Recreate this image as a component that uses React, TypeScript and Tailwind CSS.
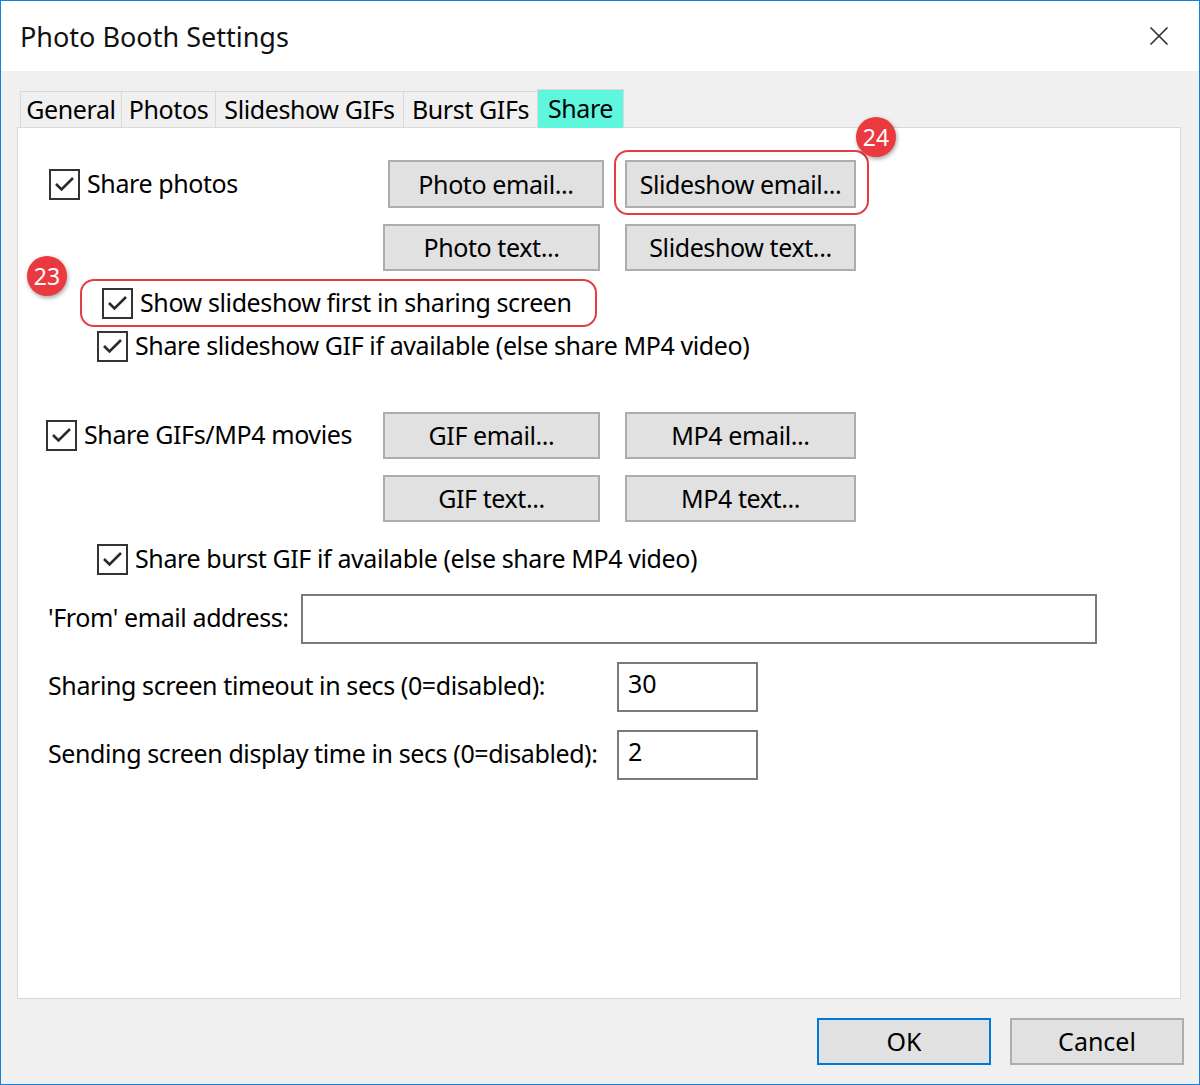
import { X } from 'lucide-react'

const font = "font-['Noto_Sans',sans-serif]"

function CheckBox() {
  return (
    <div className="w-[31px] h-[31px] shrink-0 border-2 border-[#333333] bg-white flex items-center justify-center">
      <svg width="27" height="27" viewBox="0 0 27 27">
        <path d="M5 13 L10.5 18.5 L22 7" fill="none" stroke="#2a2a2a" strokeWidth="2.6" />
      </svg>
    </div>
  )
}

function CheckRow({ label }: { label: string }) {
  return (
    <div className="flex items-center gap-[7px]">
      <CheckBox />
      <span className="text-[25px] leading-none tracking-[-0.4px] whitespace-nowrap -mt-[2px]">{label}</span>
    </div>
  )
}

function Btn({ label, className = '' }: { label: string; className?: string }) {
  return (
    <div className={`relative h-full bg-[#e1e1e1] border-2 border-[#adadad] flex items-center justify-center text-[25px] leading-none tracking-[-0.4px] ${className}`}>
      {label}
    </div>
  )
}

function Badge({ n, className }: { n: string; className: string }) {
  return (
    <div className={`absolute w-[40px] h-[40px] rounded-full bg-[#ea3a40] text-white text-[23px] leading-none flex items-center justify-center shadow-[1px_2px_4px_rgba(0,0,0,0.35)] ${className}`}>
      {n}
    </div>
  )
}

export default function App() {
  const tabs = ['General', 'Photos', 'Slideshow GIFs', 'Burst GIFs']
  const tabWidths = ['w-[102px]', 'w-[95px]', 'w-[189px]', 'w-[135px]']

  return (
    <div className={`w-[1200px] h-[1085px] flex flex-col border border-[#1a7fd6] bg-[#f0f0f0] text-black ${font}`}>
      {/* title bar */}
      <div className="h-[70px] bg-white flex items-center justify-between pl-[19px] pr-[24px] shrink-0">
        <span className="text-[27px] leading-none text-[#111]">Photo Booth Settings</span>
        <X className="w-[32px] h-[32px] text-[#333]" strokeWidth={1.3} />
      </div>

      {/* tabs */}
      <div className="flex items-end pl-[19px] mt-[17px] h-[39px] relative z-10">
        {tabs.map((t, i) => (
          <div
            key={t}
            className={`${tabWidths[i]} h-[36px] border border-b-0 border-[#d9d9d9] flex items-center justify-center text-[25px] leading-none tracking-[-0.4px] bg-[#f0f0f0] -mr-px`}
          >
            {t}
          </div>
        ))}
        <div className="w-[87px] h-[39px] bg-[#5ef6dd] border border-b-0 border-[#d9d9d9] flex items-center justify-center text-[25px] leading-none tracking-[-0.4px] -mb-px pb-[2px]">
          Share
        </div>
      </div>

      {/* panel */}
      <div className="ml-[16px] w-[1164px] h-[872px] bg-white border border-[#d9d9d9] flex flex-col">
        {/* share photos */}
        <div className="flex items-center h-[48px] mt-[32px]">
          <div className="w-[370px] pl-[31px]">
            <CheckRow label="Share photos" />
          </div>
          <Btn label="Photo email..." className="w-[216px]" />
          <div className="relative ml-[21px] h-full">
            <Btn label="Slideshow email..." className="w-[231px]" />
            <div className="absolute left-[-11px] top-[-10px] w-[255px] h-[65px] border-2 border-[#e63c45] rounded-[14px]" />
            <Badge n="24" className="left-[231px] top-[-43px]" />
          </div>
        </div>
        <div className="flex items-center h-[47px] mt-[16px]">
          <div className="w-[365px]" />
          <Btn label="Photo text..." className="w-[217px]" />
          <Btn label="Slideshow text..." className="w-[231px] ml-[25px]" />
        </div>

        <div className="pl-[84px] mt-[17px] flex">
          <div className="relative">
            <div className="absolute left-[-22px] top-[-9px] w-[517px] h-[48px] border-2 border-[#e63c45] rounded-[14px]" />
            <Badge n="23" className="left-[-75px] top-[-32px]" />
            <CheckRow label="Show slideshow first in sharing screen" />
          </div>
        </div>
        <div className="pl-[79px] mt-[12px]">
          <CheckRow label="Share slideshow GIF if available (else share MP4 video)" />
        </div>

        {/* share gifs */}
        <div className="flex items-center h-[47px] mt-[50px]">
          <div className="w-[365px] pl-[28px]">
            <CheckRow label="Share GIFs/MP4 movies" />
          </div>
          <Btn label="GIF email..." className="w-[217px]" />
          <Btn label="MP4 email..." className="w-[231px] ml-[25px]" />
        </div>
        <div className="flex items-center h-[47px] mt-[16px]">
          <div className="w-[365px]" />
          <Btn label="GIF text..." className="w-[217px]" />
          <Btn label="MP4 text..." className="w-[231px] ml-[25px]" />
        </div>
        <div className="pl-[79px] mt-[22px]">
          <CheckRow label="Share burst GIF if available (else share MP4 video)" />
        </div>

        {/* fields */}
        <div className="flex items-center h-[50px] mt-[19px]">
          <div className="w-[283px] pl-[30px] text-[25px] leading-none tracking-[-0.4px] whitespace-nowrap -mt-[4px]">'From' email address:</div>
          <div className="w-[796px] h-full border-2 border-[#7a7a7a] bg-white" />
        </div>
        <div className="flex items-center h-[50px] mt-[18px]">
          <div className="w-[599px] pl-[30px] text-[25px] leading-none tracking-[-0.4px] whitespace-nowrap -mt-[3px]">Sharing screen timeout in secs (0=disabled):</div>
          <div className="w-[141px] h-full border-2 border-[#7a7a7a] bg-white pl-[9px] pt-[7px] text-[25px] leading-none">30</div>
        </div>
        <div className="flex items-center h-[50px] mt-[18px]">
          <div className="w-[599px] pl-[30px] text-[25px] leading-none tracking-[-0.4px] whitespace-nowrap -mt-[3px]">Sending screen display time in secs (0=disabled):</div>
          <div className="w-[141px] h-full border-2 border-[#7a7a7a] bg-white pl-[9px] pt-[7px] text-[25px] leading-none">2</div>
        </div>
      </div>

      {/* footer buttons */}
      <div className="flex justify-end gap-[19px] pr-[15px] mt-[19px]">
        <div className="w-[174px] h-[47px] bg-[#e1e1e1] border-2 border-[#0078d7] flex items-center justify-center text-[25px] leading-none">OK</div>
        <div className="w-[174px] h-[47px] bg-[#e1e1e1] border-2 border-[#adadad] flex items-center justify-center text-[25px] leading-none">Cancel</div>
      </div>
    </div>
  )
}
